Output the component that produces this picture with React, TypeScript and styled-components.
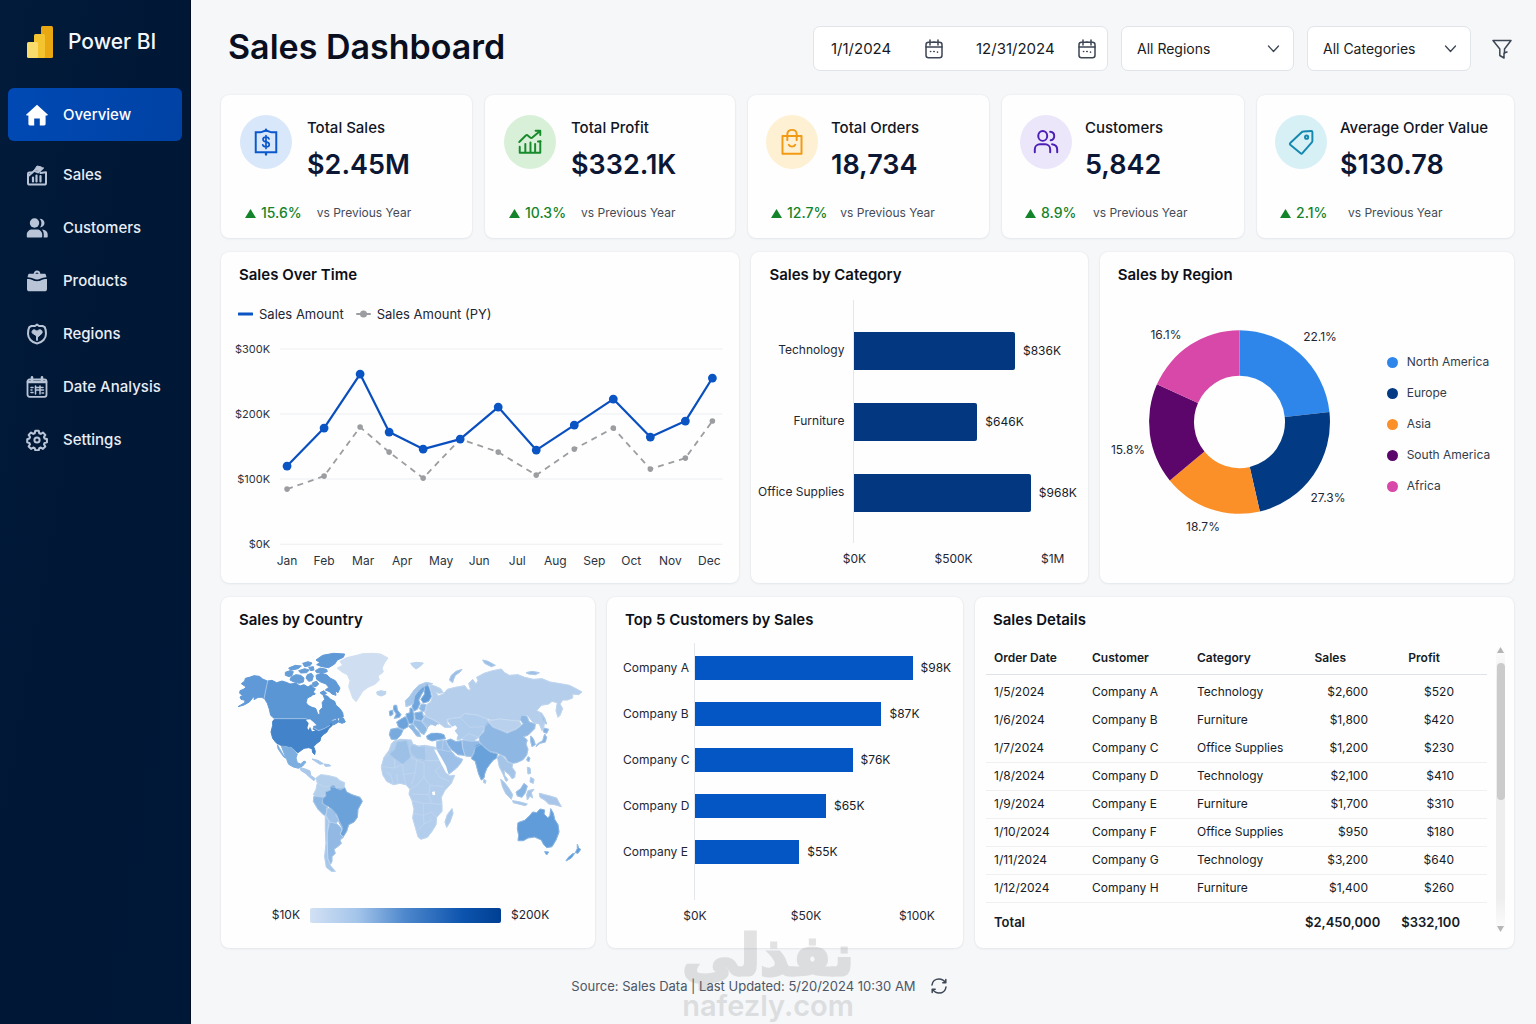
import React from "react";
import styled, { createGlobalStyle } from "styled-components";

const GlobalStyle = createGlobalStyle`
  *, *::before, *::after { box-sizing: border-box; }
  body {
    margin: 0;
    background: #f5f7f9;
    color: #11151f;
    font-family: Inter, "Liberation Sans", sans-serif;
    font-size: 13px;
    line-height: 20px;
  }
  h1, h2, p, ul, dl, dd, figure { margin: 0; padding: 0; }
  ul { list-style: none; }
`;

/* ---------- Shell ---------- */

const Shell = styled.div`
  position: relative;
  display: flex;
  min-height: 100vh;
`;

const Sidebar = styled.aside`
  flex: 0 0 191px;
  padding: 25px 8px;
  background: linear-gradient(100deg, #021b3a 0%, #001735 55%, #001838 100%);
  border-right: 1px solid #000d22;
`;

const Brand = styled.div`
  display: flex;
  align-items: center;
  gap: 15px;
  height: 34px;
  margin-bottom: 29px;
  padding-left: 19px;
  color: #f4f7fc;
  font-size: 21px;
  font-weight: 500;
`;

const NavList = styled.ul`
  display: flex;
  flex-direction: column;
`;

const NavLink = styled.a<{ $active?: boolean }>`
  display: flex;
  align-items: center;
  gap: 15px;
  height: 53px;
  margin-bottom: ${(p) => (p.$active ? 7 : 0)}px;
  padding-left: 18px;
  border-radius: 6px;
  background: ${(p) => (p.$active ? "linear-gradient(100deg, #0049b4, #0042a4)" : "transparent")};
  color: ${(p) => (p.$active ? "#ffffff" : "#e9eef6")};
  font-size: 15px;
  font-weight: 500;
  text-decoration: none;

  svg { flex: none; color: ${(p) => (p.$active ? "#ffffff" : "#b9c4d6")}; }
`;

const Main = styled.main`
  flex: 1;
  min-width: 0;
  display: flex;
  flex-direction: column;
  gap: 14px;
  padding: 26px 22px 20px 30px;
`;

const Header = styled.header`
  display: flex;
  align-items: center;
  justify-content: space-between;
  margin-bottom: 10px;
  padding-left: 7px;
`;

const PageTitle = styled.h1`
  padding-bottom: 4px;
  color: #0a0f1f;
  font-size: 34px;
  font-weight: 600;
  line-height: 40px;
`;

const Filters = styled.form`
  display: flex;
  align-items: center;
  gap: 13px;
`;

const ControlBox = styled.div<{ $width: number }>`
  position: relative;
  display: flex;
  align-items: center;
  width: ${(p) => p.$width}px;
  height: 45px;
  border: 1px solid #e1e4e8;
  border-radius: 7px;
  background: #ffffff;
`;

const DateField = styled.label`
  display: flex;
  align-items: center;
  padding-left: 17px;

  & + & { padding-left: 32px; }
`;

const DateInput = styled.input<{ $width: number }>`
  width: ${(p) => p.$width}px;
  padding: 0;
  border: 0;
  outline: 0;
  background: transparent;
  color: #171a22;
  font: 400 15px/20px Inter, sans-serif;
`;

const Select = styled.select`
  width: 100%;
  height: 100%;
  padding: 0 36px 0 15px;
  border: 0;
  border-radius: 7px;
  outline: 0;
  appearance: none;
  background: transparent;
  color: #171a22;
  font: 400 14px/20px Inter, sans-serif;
`;

const SelectArrow = styled.svg`
  position: absolute;
  right: 13px;
  top: 17px;
  color: #3d4654;
  pointer-events: none;
`;

const IconButton = styled.button`
  display: grid;
  place-items: center;
  padding: 0;
  border: 0;
  background: transparent;
  color: #3d4654;
  cursor: pointer;
`;

const FilterButton = styled(IconButton)`
  width: 30px;
  height: 30px;
  padding-left: 6px;
`;

/* ---------- Cards ---------- */

const Row = styled.div<{ $columns: string; $gap?: number }>`
  display: grid;
  grid-template-columns: ${(p) => p.$columns};
  gap: ${(p) => p.$gap ?? 12}px;
`;

const Card = styled.section`
  min-width: 0;
  border-radius: 8px;
  background: #fefefe;
  box-shadow: 0 0 2px rgba(20, 35, 60, 0.08), 0 1px 3px rgba(20, 35, 60, 0.05);
`;

const CardTitle = styled.h2`
  padding: 13px 18px 1px;
  color: #0d1018;
  font-size: 15px;
  font-weight: 600;
  line-height: 20px;
`;

const KpiCard = styled(Card)<{ $roomy?: boolean }>`
  display: flex;
  flex-direction: column;
  gap: 20px;
  padding: 20px 0 15px ${(p) => (p.$roomy ? 19 : 18)}px;
  --kpi-gap: ${(p) => (p.$roomy ? 15 : 13)}px;
`;

const KpiTop = styled.div`
  display: flex;
  gap: var(--kpi-gap);
`;

const KpiBadge = styled.span<{ $bg: string; $fg: string }>`
  display: grid;
  flex: none;
  place-items: center;
  width: 52px;
  height: 54px;
  border-radius: 50%;
  background: ${(p) => p.$bg};
  color: ${(p) => p.$fg};
`;

const KpiText = styled.div`
  padding-top: 3px;
  white-space: nowrap;
`;

const KpiLabel = styled.p`
  font-size: 15px;
  font-weight: 500;
  line-height: 20px;
`;

const KpiValue = styled.p`
  margin-top: 9px;
  color: #0c1735;
  font-size: 27px;
  font-weight: 600;
  line-height: 36px;
`;

const KpiTrend = styled.p`
  display: flex;
  align-items: center;
  padding-left: 5px;
  color: #444b57;
  font-size: 12px;
  white-space: nowrap;
`;

const TrendValue = styled.strong`
  min-width: 39px;
  margin: 0 var(--kpi-gap) 0 5px;
  color: #14842a;
  font-size: 14px;
  font-weight: 500;
`;

const ChartSvg = styled.svg`
  display: block;
  width: 100%;
  height: auto;
  font-family: Inter, "Liberation Sans", sans-serif;
`;

const LineFrame = styled.div`
  padding-bottom: 9px;
`;

const Legend = styled.ul`
  display: flex;
  gap: 12px;
  padding: 18px 17px 10px;
  color: #1d2534;

  li { display: flex; align-items: center; gap: 6px; }
`;

/* ---------- Bar charts ---------- */

const BarFigure = styled.figure<{ $label: number; $right: number; $top: number }>`
  display: grid;
  grid-template-columns: ${(p) => p.$label}px 1fr;
  padding: ${(p) => p.$top}px ${(p) => p.$right}px 0 0;
  font-size: 12px;
`;

const BarLabels = styled.ul<{ $bar: number; $gap: number; $pad: number; $start?: boolean }>`
  display: flex;
  flex-direction: column;
  gap: ${(p) => p.$gap}px;
  padding: ${(p) => (p.$start ? `${p.$pad}px 0 0 16px` : `${p.$pad - 1}px 10px 0 0`)};
  color: #1f2735;
  text-align: ${(p) => (p.$start ? "left" : "right")};
  white-space: nowrap;

  li { height: ${(p) => p.$bar}px; line-height: ${(p) => p.$bar}px; }
`;

const BarPlot = styled.ul<{ $gap: number; $pad: number; $end: number }>`
  display: flex;
  flex-direction: column;
  gap: ${(p) => p.$gap}px;
  padding: ${(p) => p.$pad}px 0 ${(p) => p.$end}px;
  box-shadow: -1px 0 0 #e3e6ea;
`;

const BarItem = styled.li<{ $height: number }>`
  display: flex;
  align-items: center;
  gap: 8px;
  height: ${(p) => p.$height}px;
  color: #161b27;
  white-space: nowrap;
`;

const Bar = styled.span<{ $color: string; $radius: number }>`
  flex: none;
  height: 100%;
  border-radius: 0 ${(p) => p.$radius}px ${(p) => p.$radius}px 0;
  background: ${(p) => p.$color};
`;

const BarAxis = styled.div`
  grid-column: 2;
  display: flex;
  justify-content: space-between;
  padding-top: 6px;
  color: #1f2735;

  span { display: flex; justify-content: center; width: 0; white-space: nowrap; }
`;

type BarDatum = { name: string; value: string; width: number };

type BarChartProps = {
  data: BarDatum[];
  ticks: string[];
  color: string;
  bar: number;
  gap: number;
  label: number;
  right: number;
  top: number;
  pad: number;
  end: number;
  radius: number;
  start?: boolean;
};

function BarChart(p: BarChartProps) {
  return (
    <BarFigure $label={p.label} $right={p.right} $top={p.top}>
      <BarLabels $bar={p.bar} $gap={p.gap} $pad={p.pad} $start={p.start}>
        {p.data.map((d) => <li key={d.name}>{d.name}</li>)}
      </BarLabels>
      <BarPlot $gap={p.gap} $pad={p.pad} $end={p.end}>
        {p.data.map((d) => (
          <BarItem key={d.name} $height={p.bar}>
            <Bar $color={p.color} $radius={p.radius} style={{ width: `${d.width}%` }} />
            {d.value}
          </BarItem>
        ))}
      </BarPlot>
      <BarAxis>
        {p.ticks.map((t) => <span key={t}>{t}</span>)}
      </BarAxis>
    </BarFigure>
  );
}

/* ---------- Line chart ---------- */

const months: [string, number][] = [
  ["Jan", 287], ["Feb", 324], ["Mar", 363], ["Apr", 402], ["May", 441], ["Jun", 479],
  ["Jul", 517], ["Aug", 555], ["Sep", 594], ["Oct", 631], ["Nov", 670], ["Dec", 709],
];
const current: [number, number][] = [
  [287, 466], [324, 428], [360, 374], [389, 432], [423, 449], [460, 439], [498, 407],
  [536, 450], [574, 425], [613, 399], [650, 437], [685, 421], [712, 378],
];
const previous: [number, number][] = [
  [287, 489], [324, 476], [360, 427], [389, 452], [423, 478], [460, 439], [498, 452],
  [536, 475], [574, 449], [613, 428], [650, 469], [685, 458], [712, 421],
];

function LineChart() {
  return (
    <ChartSvg viewBox="221 334 518 240" role="img" aria-label="Sales over time">
      {[["$300K", 349], ["$200K", 414], ["$100K", 479], ["$0K", 544]].map(([t, y]) => (
        <g key={t}>
          <line x1={280} x2={722} y1={y} y2={y} stroke="#eceef0" />
          <text x={270} y={Number(y) + 4} fontSize={11} textAnchor="end" fill="#2b3341">{t}</text>
        </g>
      ))}
      {months.map(([m, x]) => (
        <text key={m} x={x} y={565} fontSize={12} textAnchor="middle" fill="#2b3341">{m}</text>
      ))}
      <polyline points={previous.join(" ")} fill="none" stroke="#9b9da1" strokeWidth={1.8} strokeDasharray="6 5" />
      {previous.map(([x, y]) => <circle key={x} cx={x} cy={y} r={2.8} fill="#9b9da1" />)}
      <polyline points={current.join(" ")} fill="none" stroke="#0a4fc0" strokeWidth={2.2} strokeLinejoin="round" />
      {current.map(([x, y]) => <circle key={x} cx={x} cy={y} r={4.4} fill="#0a54c4" />)}
    </ChartSvg>
  );
}

/* ---------- Donut ---------- */

const regions = [
  { name: "North America", color: "#2f86ea", from: 0, to: 83.7, pct: "22.1%", x: 1320, y: 337 },
  { name: "Europe", color: "#033a84", from: 83.7, to: 167, pct: "27.3%", x: 1328, y: 498 },
  { name: "Asia", color: "#fb8f28", from: 167, to: 230.4, pct: "18.7%", x: 1203, y: 527 },
  { name: "South America", color: "#5c066b", from: 230.4, to: 294.2, pct: "15.8%", x: 1128, y: 450 },
  { name: "Africa", color: "#d748a8", from: 294.2, to: 360, pct: "16.1%", x: 1166, y: 335 },
];

const DonutLayout = styled.div`
  display: flex;
  align-items: flex-start;
  padding-top: 24px;
`;

const DonutBox = styled.div`
  flex: 0 1 260px;
  min-width: 0;
`;

const RegionLegend = styled.ul`
  display: flex;
  flex-direction: column;
  gap: 11px;
  padding: 42px 0 0 27px;
  color: #333c4b;
  font-size: 12px;
  white-space: nowrap;

  li { display: flex; align-items: center; gap: 9px; }
`;

const Dot = styled.span<{ $color: string }>`
  width: 11px;
  height: 11px;
  border-radius: 50%;
  background: ${(p) => p.$color};
`;

function arc(from: number, to: number) {
  const at = (deg: number, r: number) => {
    const a = ((deg - 90) * Math.PI) / 180;
    return `${(1239.5 + r * Math.cos(a)).toFixed(2)} ${(422 + r * 1.015 * Math.sin(a)).toFixed(2)}`;
  };
  return `M${at(from, 90.5)} A90.5 92 0 0 1 ${at(to, 90.5)} L${at(to, 45.5)} A45.5 46.2 0 0 0 ${at(from, 45.5)}Z`;
}

function Donut() {
  return (
    <ChartSvg viewBox="1100 310 260 250" role="img" aria-label="Sales by region">
      {regions.map((r) => (
        <g key={r.name}>
          <path d={arc(r.from, r.to)} fill={r.color} />
          <text x={r.x} y={r.y + 4} fontSize={12} textAnchor="middle" fill="#1f2735">{r.pct}</text>
        </g>
      ))}
    </ChartSvg>
  );
}

/* ---------- World map ---------- */

const land: [string, string][] = [
  // Alaska, Canada, USA
  ["#5f99d7", "M114 124L98 117 88 109 72 107 58 112 46 115 44 123 34 131 44 138 48 142 40 148 30 152 29 160 38 166 30 171 33 178 45 181 44 188 24 200 42 195 58 186 66 176 74 168 72 179 84 172 94 172 102 175Z"],
  ["#5b96d4", "M114 123L126 121 140 128 156 123 172 128 180 132 198 130 210 138 222 134 234 141 244 134 248 142 256 146 250 156 256 162 246 167 232 174 228 188 240 199 256 204 261 214 264 224 270 222 269 210 278 202 276 188 284 178 280 166 292 168 302 178 314 184 318 196 330 206 338 218 340 230 326 234 310 238 300 246 316 241 322 237 326 246 312 254 300 256 280 266 262 271 250 262 240 242 228 235 132 235 122 226 118 208 112 190 103 175Z"],
  ["#4283ca", "M134 237L228 237 240 242 250 264 266 272 284 265 296 258 304 250 306 257 296 266 290 277 279 284 272 293 270 303 258 312 251 320 256 334 254 344 248 338 246 326 236 323 222 325 214 331 204 338 194 330 184 321 168 318 152 316 138 308 128 295 123 276 128 256 128 244Z"],
  // Arctic archipelago
  ["#659dd8", "M166 97L180 92 190 95 186 106 178 110 166 106Z M184 110L198 104 212 106 222 114 220 126 208 130 192 126 180 120Z M176 84L196 76 214 78 204 86 182 91Z M218 70L234 65 246 69 240 77 224 80Z M206 92L224 86 238 90 230 98 212 99Z M232 104L244 100 250 108 246 122 236 124 228 114Z M256 92L270 84 290 88 292 95 278 99 260 98Z M236 82L250 80 252 90 242 92Z M248 128L260 124 266 132 258 140 248 138Z"],
  ["#5f99d6", "M258 60L278 46 310 40 344 42 340 52 322 60 314 72 296 83 276 80 260 74 270 68Z M258 106L274 100 290 104 300 114 316 122 322 132 330 144 324 158 316 152 318 166 306 162 298 155 286 150 296 142 288 132 272 126 260 118Z M270 158L282 152 290 160 280 166Z M330 232L340 234 346 246 336 250 326 246Z"],
  ["#cfdff1", "M322 84L338 76 330 64 350 53 380 46 398 41 430 40 452 42 474 54 464 68 456 84 460 96 444 108 448 120 436 132 414 142 398 154 388 170 378 185 368 174 362 156 356 140 360 122 352 104 336 96Z"],
  ["#bdd4ee", "M440 156L452 152 468 155 466 163 454 168 442 164Z M542 70L560 67 580 69 572 78 558 87 548 79Z"],
  // Mexico, Central America, Caribbean
  ["#7daee0", "M142 314L149 326 158 342 168 354 162 352 152 338 144 326Z M154 318L168 321 184 323 194 333 202 342 198 354 202 368 212 372 222 363 228 366 218 378 206 385 190 381 176 373 170 358 162 340Z"],
  ["#a9c8ea", "M212 383L226 387 240 393 242 406 256 416 252 422 238 411 228 401 212 391Z M246 357L264 361 280 371 270 373 256 364Z M282 372L298 374 302 378 286 379Z"],
  // South America
  ["#b4cfec", "M258 414L272 404 290 406 304 409 320 413 330 422 344 428 342 443 332 450 318 443 300 440 298 451 286 456 284 470 262 470 250 464 258 448 262 430Z"],
  ["#8db7e3", "M252 468L266 470 280 472 276 490 292 502 290 522 282 526 264 508 250 484Z"],
  ["#9dc1e8", "M290 504L306 508 318 520 326 540 318 550 300 546 288 526Z"],
  ["#6ca2da", "M286 456L302 450 300 440 312 437 318 445 332 448 344 443 350 456 366 464 390 472 397 484 384 508 382 532 372 546 356 554 350 574 340 590 330 582 338 566 328 548 322 528 308 510 296 500 280 492 276 476 288 468Z"],
  ["#91b9e4", "M300 546L318 550 330 560 336 570 330 582 340 592 330 600 334 610 326 618 312 628 316 640 306 650 306 664 302 672 294 655 292 620 292 580Z"],
  ["#a6c7ea", "M286 524L296 546 291 580 292 620 293 656 302 678 316 694 304 694 289 682 284 650 288 610 286 570Z"],
  // Africa
  ["#b3ceec", "M492 303L512 298 544 300 548 312 566 319 584 316 616 322 626 346 638 372 650 394 658 408 674 406 664 430 644 452 634 472 636 494 636 514 620 532 618 554 606 574 592 592 572 598 564 590 556 562 548 534 552 508 546 482 537 462 540 448 528 434 510 430 490 434 470 424 458 404 454 380 462 352 478 330 484 312Z"],
  ["#9dc0e7", "M500 306L530 301 536 322 542 352 518 373 494 356 478 342 494 328Z"],
  ["#a6c6e9", "M546 312L566 319 586 318 588 362 560 356 542 340 540 322Z"],
  ["#a9c8ea", "M666 506L669 520 660 546 650 562 645 546 652 524Z"],
  // Europe
  ["#a5c5e9", "M528 200L526 182 540 168 552 150 566 136 588 127 608 131 596 137 580 138 566 152 553 168 550 190 540 196Z"],
  ["#6fa5dc", "M550 190L554 168 568 150 580 139 584 148 574 164 566 180 570 190 562 208 552 213 546 200Z"],
  ["#5f9ad7", "M583 140L594 133 600 150 604 170 596 184 580 189 573 178 584 162Z"],
  ["#6da3db", "M492 196L500 196 502 210 513 224 508 232 493 235 499 222 490 208Z M478 214L488 211 489 223 480 228Z M500 246L512 238 526 230 536 244 534 260 520 268 506 262Z M528 222L540 218 540 204 548 206 552 236 548 250 534 250Z"],
  ["#78aade", "M482 268L502 264 519 271 512 286 500 298 484 298 478 284Z M554 219L576 215 582 230 574 242 556 238Z"],
  ["#8db8e4", "M534 258L550 252 556 266 568 278 572 290 560 288 548 272Z M552 240L574 244 590 256 590 270 582 284 572 278 560 262 550 252Z M574 192L588 194 588 214 576 214 568 206Z"],
  ["#a3c4e9", "M578 222L592 232 610 238 628 250 618 258 600 254 592 266 576 246 584 232Z"],
  ["#6ea4db", "M590 288L604 280 622 278 642 284 646 296 622 299 606 303 592 297Z"],
  // Russia and northern islands
  ["#b4ceec", "M596 134L614 138 632 146 640 158 626 160 618 156 624 168 640 162 652 148 676 142 704 137 714 150 722 150 716 130 728 118 738 132 744 122 740 112 762 100 788 92 814 87 824 98 838 106 864 104 884 112 910 118 936 116 960 126 996 132 1018 136 1038 146 1056 156 1046 164 1028 162 1028 174 1012 180 998 180 990 192 998 206 990 226 984 232 978 212 982 188 966 184 956 192 934 196 920 212 936 220 944 238 942 258 936 272 928 252 910 248 892 226 874 226 868 242 840 240 810 236 790 240 770 236 740 224 704 220 690 232 668 234 650 238 652 252 664 262 644 262 628 250 606 238 590 230 584 216 590 194 602 186 608 168 602 150Z"],
  ["#9dbfe6", "M658 120L664 106 678 94 696 88 690 96 676 106 670 120 668 128Z M758 60L774 64 796 76 784 80 764 70Z M888 98L906 94 928 98 916 104 896 102Z M936 222L944 234 950 252 944 250 938 238Z"],
  // Asia
  ["#b0ccec", "M652 240L668 235 690 233 704 221 740 225 770 237 778 248 764 260 758 276 746 292 730 304 712 302 696 296 682 300 680 286 672 274 678 262 664 258Z"],
  ["#b9d1ed", "M776 242L810 237 840 241 868 244 874 254 858 266 832 277 806 267 788 260Z"],
  ["#8fb7e3", "M774 246L788 262 808 270 832 280 860 268 880 252 870 238 874 226 890 228 898 246 916 252 914 266 902 278 894 286 880 290 892 300 888 312 894 328 890 346 878 360 860 368 846 370 834 364 826 350 812 344 800 338 780 334 762 320 748 304 748 290 762 276 764 258Z"],
  ["#7dade0", "M648 302L662 297 678 305 694 302 698 324 704 346 684 344 664 328 654 314Z"],
  ["#93bae5", "M698 300L720 303 746 304 752 314 736 322 730 340 724 350 706 348 698 324Z"],
  ["#9cc0e7", "M620 304L646 300 654 318 664 334 678 350 698 358 692 370 680 384 656 403 648 394 640 372 628 350 620 328Z"],
  ["#69a1da", "M736 316L750 310 762 322 780 336 802 342 800 354 790 360 780 372 770 386 764 402 762 414 754 420 746 402 740 380 736 364 724 356 732 340Z"],
  ["#a4c4e8", "M802 350L812 345 824 354 832 366 848 371 846 382 856 396 854 412 846 416 838 404 828 396 822 390 824 406 834 420 828 424 818 400 808 380Z M762 418L768 422 766 430 760 427Z M812 418L822 426 836 444 848 464 844 478 828 462 818 442Z M848 482L870 486 892 492 886 497 850 488Z M892 382L900 384 902 400 894 402Z M902 412L912 418 910 430 900 426Z M894 452L912 448 904 458 908 474 900 468 892 480 890 464Z"],
  ["#87b3e2", "M858 456L872 446 882 430 892 438 886 458 876 472 862 468Z M894 350L900 354 896 366 890 360Z"],
  ["#a9c6e9", "M928 460L944 464 960 468 980 474 986 486 994 500 974 494 956 492 944 480 930 472Z"],
  ["#86b2e2", "M902 288L910 296 916 314 906 320 902 304Z M942 264L956 268 950 280 940 276Z M944 282L950 292 946 306 930 310 918 320 922 312 938 302Z"],
  // Oceania
  ["#5f9cd9", "M864 548L884 541 898 528 908 516 920 518 930 507 944 510 942 522 954 534 960 526 962 506 970 520 974 538 984 554 987 576 978 600 966 620 950 623 940 612 934 600 914 591 894 594 880 602 864 602 866 586 862 566Z M944 635L956 636 950 645Z M1042 612L1046 624 1052 628 1044 640 1036 638 1042 626Z M1034 640L1024 654 1008 663 1014 653 1028 641Z"],
];

const borders =
  "M454 380L494 384 518 373 M494 356L494 384 M462 352L478 342 M518 373L520 404 528 434 M542 352L560 360 582 370 582 410 M588 362L628 362 M520 404L556 398 560 358 M556 398L544 434 M582 410L560 436 540 448 M582 410L600 436 640 440 M600 436L596 464 604 490 636 494 M596 464L546 462 M546 482L580 490 604 490 M548 520L580 526 604 516 620 532 M580 490L580 526 582 552 564 570 M582 552L604 540 M470 398L482 404 490 434 M500 402L504 428 M638 372L616 392 630 412 658 424 M316 522L338 562 M262 430L284 440 300 440 M696 296L716 280 746 292 M690 232L720 262 764 260 M640 300L636 330 662 336 M620 328L636 330";

function WorldMap() {
  return (
    <ChartSvg viewBox="-27 0 1122 720" role="img" aria-label="Sales by country">
      {land.map(([fill, d], i) => (
        <path key={i} d={d} fill={fill} stroke={fill} strokeWidth={3} strokeLinejoin="round" />
      ))}
      {land.slice(9).map(([, d], i) => (
        <path key={i} d={d} fill="none" stroke="#d6e4f4" strokeWidth={1} strokeLinejoin="round" />
      ))}
      <path d={borders} fill="none" stroke="#cbddf2" strokeWidth={1.4} />
      <path d="M113 123L102 176M132 236H228L240 243M250 263L266 272 284 265 300 256" fill="none" stroke="#c4dbf3" strokeWidth={2} />
      <g fill="#fefefe">
        <path d="M228 240L240 238 250 246 260 256 250 258 248 268 256 272 246 274 240 260 236 270 232 264 236 250Z" />
        <path d="M664 262L676 256 682 264 674 272 684 286 678 298 668 292 666 278Z" />
        <path d="M594 262L606 254 616 260 622 252 628 262 640 270 634 278 612 278 598 276Z" />
        <path d="M606 456L614 454 616 464 608 466Z" />
        <path d="M238 182L232 192 246 200 260 204 264 220 268 210 276 200 272 180 260 166 248 166Z" />
        <path d="M612 328L620 330 636 356 648 378 656 404 648 398 634 372Z" />
      </g>
    </ChartSvg>
  );
}

const MapFrame = styled.div`
  padding-top: 9px;
`;

const Scale = styled.div`
  display: flex;
  align-items: center;
  justify-content: center;
  gap: 10px;
  padding: 25px 0 23px 5px;
  color: #1d2534;
  font-size: 12px;
`;

const ScaleBar = styled.span`
  flex: 0 1 191px;
  height: 15px;
  border-radius: 2px;
  background: linear-gradient(90deg, #d2e1f4 0%, #a3c4ea 25%, #4d87cc 50%, #0d54ae 80%, #003f93 100%);
`;

/* ---------- Table ---------- */

const TableArea = styled.div`
  display: flex;
  gap: 9px;
  padding: 12px 9px 6px 11px;
`;

const DataTable = styled.table`
  flex: 1;
  width: 100%;
  min-width: 0;
  table-layout: fixed;
  border-collapse: collapse;
  color: #161b26;
  font-size: 12px;

  th, td { height: 28px; padding: 0 8px; text-align: left; white-space: nowrap; }
  thead th { height: 31px; border-bottom: 1px solid #dfe2e6; font-weight: 600; }
  tbody td { border-bottom: 1px solid #eff0f2; }
  tbody tr:first-child td { height: 32px; padding-top: 4px; }
  tbody tr:nth-child(-n + 2) td { border-bottom-color: transparent; }
  tfoot th, tfoot td { height: 40px; border-top: 1px solid #dcdfe3; font-size: 13px; font-weight: 600; }
  th:nth-child(4), th:nth-child(5), td:nth-child(4), td:nth-child(5) { text-align: right; }
  thead th:nth-child(4) { padding-right: 40px; }
  thead th:nth-child(5) { padding-right: 47px; }
  tbody td:nth-child(4) { padding-right: 18px; }
  tbody td:nth-child(5) { padding-right: 33px; }
  tfoot td:nth-child(5) { padding-right: 27px; }
`;

const Col = styled.col<{ $width?: number }>`
  width: ${(p) => (p.$width ? `${p.$width}px` : "auto")};
`;

const ScrollTrack = styled.div`
  display: flex;
  flex: 0 0 9px;
  flex-direction: column;
  align-items: center;
  gap: 10px;
  margin: 4px 0 10px;
  border-radius: 5px;
  background: linear-gradient(#fdfdfd, #eeeeee 12%, #eeeeee 88%, #fdfdfd);

  svg { flex: none; }
  svg:last-child { margin-top: auto; }
`;

const ScrollThumb = styled.span`
  width: 8px;
  height: 137px;
  border-radius: 4px;
  background: #cbcbcb;
`;

const rows = [
  ["1/5/2024", "Company A", "Technology", "$2,600", "$520"],
  ["1/6/2024", "Company B", "Furniture", "$1,800", "$420"],
  ["1/7/2024", "Company C", "Office Supplies", "$1,200", "$230"],
  ["1/8/2024", "Company D", "Technology", "$2,100", "$410"],
  ["1/9/2024", "Company E", "Furniture", "$1,700", "$310"],
  ["1/10/2024", "Company F", "Office Supplies", "$950", "$180"],
  ["1/11/2024", "Company G", "Technology", "$3,200", "$640"],
  ["1/12/2024", "Company H", "Furniture", "$1,400", "$260"],
];

/* ---------- Footer ---------- */

const Footer = styled.footer`
  display: flex;
  align-items: center;
  justify-content: center;
  gap: 14px;
  margin-top: 14px;
  padding-right: 216px;
  color: #4d5665;
  font-size: 13px;
`;

const Watermark = styled.div`
  position: absolute;
  top: 924px;
  left: 50%;
  width: 190px;
  margin-left: -95px;
  color: #77797d;
  opacity: 0.2;
  text-align: center;
  white-space: nowrap;
  pointer-events: none;
`;

const WatermarkArabic = styled.p`
  font: 700 56px/64px "DejaVu Sans", sans-serif;
  -webkit-text-stroke: 3px #77797d;
`;

const WatermarkLatin = styled.p`
  font: 600 29px/36px Inter, sans-serif;
`;

/* ---------- Icons ---------- */

const line = { fill: "none", stroke: "currentColor", strokeLinecap: "round", strokeLinejoin: "round" } as const;

const navItems: { label: string; icon: React.ReactNode }[] = [
  {
    label: "Overview",
    icon: <path fill="currentColor" d="M11 .8L.3 10.4c-.4.4-.1 1 .4 1H2.400V20c0 .8.6 1.400 1.400 1.400H8.200v-6.800h5.600v6.800h4.400c.8 0 1.400-.6 1.400-1.400v-8.600h1.700c.6 0 .8-.6.4-1z" />,
  },
  {
    label: "Sales",
    icon: (
      <g {...line} strokeWidth={2}>
        <path d="M6 8.500H3.200C2.400 8.500 2 9 2 9.700V19c0 1 .6 1.600 1.600 1.600h14.800c1 0 1.600-.6 1.600-1.600V8.200L14.500 9" />
        <path d="M3 11.500L8 7l4 1.500L17 4" strokeWidth={1.800} />
        <path d="M8 6.500l3-4.500 4.500 1-1 4z" fill="currentColor" strokeWidth={1} />
        <path d="M7 13.500v4M10.500 11.500v6M14.500 12v5.500" strokeWidth={2.200} />
      </g>
    ),
  },
  {
    label: "Customers",
    icon: (
      <g fill="currentColor">
        <circle cx="8.500" cy="6" r="4.700" />
        <path d="M.8 19.600v-2c0-3.200 2.600-5.200 5.200-5.200h5c2.800 0 5.200 2 5.200 5.200v2c0 .7-.4 1-1 1H1.800c-.6 0-1-.3-1-1z" />
        <path d="M13.600 1.700c3 0 4.900 1.900 4.900 4.400s-2 4.300-4.600 4.400c1-1.200 1.500-2.700 1.500-4.400s-.6-3.200-1.800-4.400z" />
        <path d="M16 12.500c3.400.2 5.700 2.200 5.700 5.100v2c0 .7-.4 1-1 1h-3c.3-3.400.2-5.800-1.700-8.100z" />
      </g>
    ),
  },
  {
    label: "Products",
    icon: (
      <g>
        <path {...line} strokeWidth={1.800} d="M8.500 4.500c0-1.800 1-3 2.500-3s2.500 1.200 2.500 3" />
        <path fill="currentColor" d="M3.500 3.800h15c.8 0 1.200.5 1.400 1.200l.6 2.200c-2.500.3-4.600.5-6.300 1.500-1.200.9-5 .9-6.200 0C6.200 7.700 4 7.500 1.500 7.200L2.100 5c.2-.7.6-1.200 1.400-1.200z" />
        <path fill="currentColor" d="M1 9c2.500 0 4.500.3 6 1.300 1.800 1.200 6.200 1.200 8 0 1.500-1 3.500-1.300 6-1.300v10c0 1.400-.9 2.300-2.300 2.300H3.300C1.900 21.300 1 20.400 1 19z" />
      </g>
    ),
  },
  {
    label: "Regions",
    icon: (
      <g {...line} strokeWidth={2}>
        <path d="M11 1.500L9 3H5.500L3.200 4.200C2.300 6 2 8.300 2 10.800c0 4.700 3.600 8.700 9 9.700 5.400-1 9-5 9-9.700 0-2.500-.3-4.800-1.200-6.600L16.500 3H13z" />
        <path d="M10.800 16v-3L6.200 10C5.500 7.700 7.300 6 9.300 7.200l1.700 1 1.800-1.200c2.200-.9 4 .9 3.200 3.200l-3.500 3.300" fill="currentColor" strokeWidth={1} />
        <path d="M11 12v5" strokeWidth={1.800} />
      </g>
    ),
  },
  {
    label: "Date Analysis",
    icon: (
      <g {...line} strokeWidth={1.800}>
        <rect x="1.500" y="3.500" width="19" height="17.300" rx="2" />
        <path d="M2 6h18M6 1.300v4M16 1.300v4" strokeWidth={2.600} />
        <path d="M5 11.500h2M10 11.500h7M5 16.500h2M9.500 10v8M14 10v8M5 14h1M9.500 14h8M16 17h1.500" strokeWidth={1.500} />
      </g>
    ),
  },
  {
    label: "Settings",
    icon: (
      <g {...line}>
        <path strokeWidth={2.200} d="M9.200 1.500h3.600l.6 2.600 1.600.7 2.300-1.400 2.500 2.500-1.400 2.300.7 1.600 2.400.6v3.400l-2.500.6-.6 1.500 1.400 2.300-2.500 2.500-2.300-1.400-1.600.7-.6 2.200H9.200l-.6-2.200-1.600-.7-2.300 1.400-2.500-2.500 1.400-2.300-.7-1.500-2.200-.6v-3.400l2.200-.6.7-1.600-1.400-2.300 2.500-2.500L7 4.800l1.600-.7z" transform="translate(.6 .3) scale(.945)" />
        <circle cx="11" cy="11" r="2.600" strokeWidth={2} />
      </g>
    ),
  },
];

function CalendarIcon() {
  return (
    <svg width="20" height="20" viewBox="0 0 20 20" {...line} strokeWidth={1.500} aria-hidden="true">
      <rect x="2" y="3.200" width="16" height="15.500" rx="2.500" />
      <path d="M2 8h16M6 1v5M14 1v5M9 3.200h2" />
      <path d="M6.500 12.500h.2M9.800 12.500h.4M13.500 13v.3" strokeWidth={1.600} />
    </svg>
  );
}

function Chevron() {
  return (
    <SelectArrow width="13" height="10" viewBox="0 0 13 10" {...line} strokeWidth={1.300} aria-hidden="true">
      <path d="M1.500 2l5 5.500 5-5.500" />
    </SelectArrow>
  );
}

type Kpi = {
  label: string; value: string; trend: string; bg: string; fg: string; roomy?: boolean; icon: React.ReactNode;
};

const kpis: Kpi[] = [
  {
    label: "Total Sales", value: "$2.45M", trend: "15.6%", bg: "#d9e7fa", fg: "#0b57cc", roomy: true,
    icon: (
      <>
        <path d="M3 4.500h5c2 0 3-1.500 6-1.500s4 1.500 6 1.500h5v21.500H3z" strokeLinejoin="miter" />
        <path d="M14 1.800v1M14 27.300v1" strokeWidth={2.500} />
        <path d="M17.300 11.700c-.4-1.200-1.600-1.900-3.300-1.900-1.900 0-3.200.9-3.200 2.400 0 3.500 6.700 1.800 6.700 5.400 0 1.600-1.400 2.600-3.400 2.600-1.900 0-3.200-.8-3.600-2.200M14 8v14" strokeWidth={1.800} />
      </>
    ),
  },
  {
    label: "Total Profit", value: "$332.1K", trend: "10.3%", bg: "#d9f0d8", fg: "#178a2c", roomy: true,
    icon: (
      <>
        <path d="M2.500 15l7-7c1-.8 1.600-.6 2.400.2l2.300 2c.9.8 1.800.6 2.600-.2L24.500 3.500M20 3h5v4.500" />
        <path d="M3 20v6.500h22V14M9 17v9M14.500 15.500V26M19.500 17v9M22.500 14.500h3" />
      </>
    ),
  },
  {
    label: "Total Orders", value: "18,734", trend: "12.7%", bg: "#fef0d3", fg: "#f29a14",
    icon: (
      <>
        <path d="M3.800 8.500h20.400v19H3.800z" />
        <path d="M9 13V6.500C9 4 11 2 14 2s5 2 5 4.500V13M10.500 18c1.600 2.600 5.400 2.600 7 0" />
      </>
    ),
  },
  {
    label: "Customers", value: "5,842", trend: "8.9%", bg: "#ece6fa", fg: "#4b1fb5",
    icon: (
      <>
        <ellipse cx="10.500" cy="8.500" rx="4.800" ry="5.300" />
        <path d="M2 26v-3c0-3.300 2.600-5.500 5.500-5.500h5.500c3 0 5.500 2.200 5.500 5.500v3M18.500 4c2.600.2 4.300 2 4.300 4.500s-1.600 4.200-3.800 4.700M20.500 17.500c3.300.4 5.500 2.700 5.500 5.700V26" />
      </>
    ),
  },
  {
    label: "Average Order Value", value: "$130.78", trend: "2.1%", bg: "#d7f0f6", fg: "#1488ae",
    icon: (
      <>
        <path d="M16.500 3.800l8.500-.5c.8 0 1.200.4 1.200 1.100v9.500c0 .6-.2 1-.6 1.500L15.500 27c-.7.8-1.300.8-2 0L2.500 18c-.7-.7-.7-1.300 0-2L14.700 4.600c.5-.5 1-.8 1.800-.8z" />
        <circle cx="20" cy="9.800" r="1.700" />
      </>
    ),
  },
];

/* ---------- Page ---------- */

export default function App() {
  return (
    <>
      <GlobalStyle />
      <Shell>
        <Sidebar>
          <Brand>
            <svg width="26" height="32" viewBox="0 0 26 32" aria-hidden="true">
              <rect x="14" y="0" width="12" height="32" rx="1.500" fill="#e9a812" />
              <rect x="7" y="8" width="11" height="24" rx="1.500" fill="#f4c430" />
              <rect x="0" y="16" width="11" height="16" rx="1.500" fill="#f9dc6c" />
            </svg>
            Power BI
          </Brand>
          <nav aria-label="Main">
            <NavList>
              {navItems.map((item, i) => (
                <li key={item.label}>
                  <NavLink href="#" $active={i === 0} aria-current={i === 0 ? "page" : undefined}>
                    <svg width="22" height="22" viewBox="0 0 22 22" aria-hidden="true">{item.icon}</svg>
                    {item.label}
                  </NavLink>
                </li>
              ))}
            </NavList>
          </nav>
        </Sidebar>

        <Main>
          <Header>
            <PageTitle>Sales Dashboard</PageTitle>
            <Filters>
              <ControlBox $width={295}>
                <DateField>
                  <DateInput $width={93} aria-label="Start date" defaultValue="1/1/2024" />
                  <IconButton type="button" aria-label="Pick start date"><CalendarIcon /></IconButton>
                </DateField>
                <DateField>
                  <DateInput $width={101} aria-label="End date" defaultValue="12/31/2024" />
                  <IconButton type="button" aria-label="Pick end date"><CalendarIcon /></IconButton>
                </DateField>
              </ControlBox>
              <ControlBox $width={173}>
                <Select aria-label="Region"><option>All Regions</option></Select>
                <Chevron />
              </ControlBox>
              <ControlBox $width={164}>
                <Select aria-label="Category"><option>All Categories</option></Select>
                <Chevron />
              </ControlBox>
              <FilterButton type="button" aria-label="Filter">
                <svg width="20" height="20" viewBox="0 0 20 20" {...line} strokeWidth={1.500} aria-hidden="true">
                  <path d="M1 1.500h18L12.500 10v4.500M1 1.500L7.800 10v6.500l4.200 2.500v-5l3-1" />
                </svg>
              </FilterButton>
            </Filters>
          </Header>

          <Row $columns="251fr 250fr 241fr 242fr 257fr" $gap={13}>
            {kpis.map((k) => (
              <KpiCard key={k.label} $roomy={k.roomy}>
                <KpiTop>
                  <KpiBadge $bg={k.bg} $fg={k.fg}>
                    <svg width="28" height="28" viewBox="0 0 28 30" {...line} strokeWidth={2.100} aria-hidden="true">{k.icon}</svg>
                  </KpiBadge>
                  <KpiText>
                    <KpiLabel>{k.label}</KpiLabel>
                    <KpiValue>{k.value}</KpiValue>
                  </KpiText>
                </KpiTop>
                <KpiTrend>
                  <svg width="11" height="9" viewBox="0 0 11 9" aria-hidden="true"><path d="M5.500 0L11 9H0z" fill="#14842a" /></svg>
                  <TrendValue>{k.trend}</TrendValue>
                  vs Previous Year
                </KpiTrend>
              </KpiCard>
            ))}
          </Row>

          <Row $columns="518fr 336fr 414fr">
            <Card>
              <CardTitle>Sales Over Time</CardTitle>
              <Legend>
                <li>
                  <svg width="15" height="8" aria-hidden="true"><path d="M1 4h13" stroke="#0a54c4" strokeWidth={3} strokeLinecap="round" /></svg>
                  Sales Amount
                </li>
                <li>
                  <svg width="15" height="8" aria-hidden="true"><path d="M1 4h13" stroke="#9b9da1" strokeWidth={2} strokeLinecap="round" /><circle cx="7.500" cy="4" r="3.500" fill="#9b9da1" /></svg>
                  Sales Amount (PY)
                </li>
              </Legend>
              <LineFrame><LineChart /></LineFrame>
            </Card>
            <Card>
              <CardTitle>Sales by Category</CardTitle>
              <BarChart
                data={[
                  { name: "Technology", value: "$836K", width: 81 },
                  { name: "Furniture", value: "$646K", width: 62 },
                  { name: "Office Supplies", value: "$968K", width: 89 },
                ]}
                ticks={["$0K", "$500K", "$1M"]}
                color="#033880" bar={38} gap={33} label={103} right={35} top={14} pad={32} end={31} radius={2}
              />
            </Card>
            <Card>
              <CardTitle>Sales by Region</CardTitle>
              <DonutLayout>
                <DonutBox><Donut /></DonutBox>
                <RegionLegend>
                  {regions.map((r) => <li key={r.name}><Dot $color={r.color} />{r.name}</li>)}
                </RegionLegend>
              </DonutLayout>
            </Card>
          </Row>

          <Row $columns="374fr 356fr 539fr">
            <Card>
              <CardTitle>Sales by Country</CardTitle>
              <MapFrame><WorldMap /></MapFrame>
              <Scale>$10K <ScaleBar /> $200K</Scale>
            </Card>
            <Card>
              <CardTitle>Top 5 Customers by Sales</CardTitle>
              <BarChart
                start
                data={[
                  { name: "Company A", value: "$98K", width: 98 },
                  { name: "Company B", value: "$87K", width: 84 },
                  { name: "Company C", value: "$76K", width: 71 },
                  { name: "Company D", value: "$65K", width: 59 },
                  { name: "Company E", value: "$55K", width: 47 },
                ]}
                ticks={["$0K", "$50K", "$100K"]}
                color="#0456c4" bar={24} gap={22} label={88} right={46} top={12} pad={13} end={36} radius={0}
              />
            </Card>
            <Card>
              <CardTitle>Sales Details</CardTitle>
              <TableArea>
                <DataTable>
                  <colgroup>
                    <Col $width={98} /><Col $width={105} /><Col $width={108} /><Col $width={89} /><Col />
                  </colgroup>
                  <thead>
                    <tr>{["Order Date", "Customer", "Category", "Sales", "Profit"].map((h) => <th key={h} scope="col">{h}</th>)}</tr>
                  </thead>
                  <tbody>
                    {rows.map((r) => <tr key={r[0]}>{r.map((c) => <td key={c}>{c}</td>)}</tr>)}
                  </tbody>
                  <tfoot>
                    <tr><th scope="row">Total</th><td /><td /><td>$2,450,000</td><td>$332,100</td></tr>
                  </tfoot>
                </DataTable>
                <ScrollTrack aria-hidden="true">
                  <svg width="7" height="6"><path d="M3.500 0L7 6H0z" fill="#b5b5b5" /></svg>
                  <ScrollThumb />
                  <svg width="7" height="6"><path d="M3.500 6L7 0H0z" fill="#b5b5b5" /></svg>
                </ScrollTrack>
              </TableArea>
            </Card>
          </Row>

          <Footer>
            <span>Source: Sales Data | Last Updated: 5/20/2024 10:30 AM</span>
            <IconButton type="button" aria-label="Refresh">
              <svg width="18" height="18" viewBox="0 0 18 18" {...line} strokeWidth={1.500} aria-hidden="true">
                <path d="M2 8C2.400 4.500 5.300 2 9 2c2.600 0 4.900 1.300 6.200 3.300M15.800 2.500v3.300h-3M16 10c-.4 3.500-3.300 6-7 6-2.600 0-4.900-1.300-6.200-3.300M2.200 15.500v-3.300h3" />
              </svg>
            </IconButton>
          </Footer>
        </Main>

        <Watermark aria-hidden="true">
          <WatermarkArabic lang="ar">نفذلي</WatermarkArabic>
          <WatermarkLatin>nafezly.com</WatermarkLatin>
        </Watermark>
      </Shell>
    </>
  );
}
